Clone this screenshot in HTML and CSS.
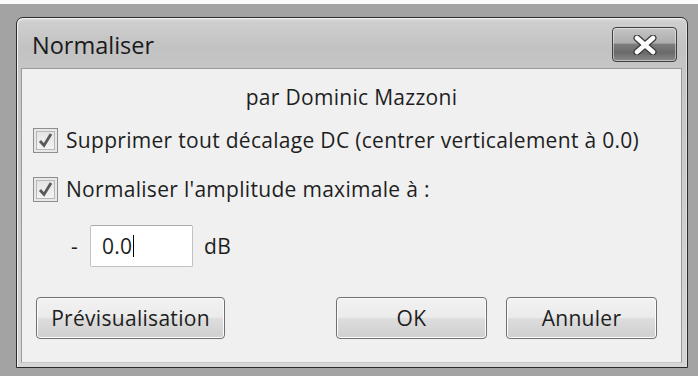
FILE: index.html
```html
<!DOCTYPE html>
<html>
<head>
<meta charset="utf-8">
<link rel="stylesheet" href="styles.css">
</head>
<body>
<div class="desktop">
  <div class="window">
    <div class="titlebar">
      <span class="title">Normaliser</span>
      <div class="close">
        <svg width="26" height="20" viewBox="0 0 26 20">
          <path d="M5 3 L21 17 M21 3 L5 17" stroke="#3a3a3a" stroke-width="7" stroke-linecap="round"/>
          <path d="M5 3 L21 17 M21 3 L5 17" stroke="#ffffff" stroke-width="4.5" stroke-linecap="round"/>
        </svg>
      </div>
    </div>
    <div class="client">
      <div class="author">par Dominic Mazzoni</div>
      <label class="check">
        <span class="box"><svg width="17" height="17" viewBox="0 0 17 17"><path d="M3 9 L7 13.5 L14 2" fill="none" stroke="#5a5a5a" stroke-width="2.8"/></svg></span>
        <span>Supprimer tout décalage DC (centrer verticalement à 0.0)</span>
      </label>
      <label class="check check2">
        <span class="box"><svg width="17" height="17" viewBox="0 0 17 17"><path d="M3 9 L7 13.5 L14 2" fill="none" stroke="#5a5a5a" stroke-width="2.8"/></svg></span>
        <span>Normaliser l'amplitude maximale à :</span>
      </label>
      <div class="level">
        <span class="minus">-</span>
        <div class="field"><span>0.0</span><span class="caret"></span></div>
        <span class="unit">dB</span>
      </div>
      <div class="buttons">
        <button class="btn preview">Prévisualisation</button>
        <div class="right">
          <button class="btn">OK</button>
          <button class="btn">Annuler</button>
        </div>
      </div>
    </div>
  </div>
</div>
</body>
</html>
```

FILE: styles.css
```css
* { box-sizing: border-box; }
html, body { margin: 0; padding: 0; }
body {
  width: 698px;
  height: 376px;
  background: #a3a3a3;
  border-top: 4px solid #fbfbfb;
  font-family: "Open Sans", "Segoe UI", sans-serif;
  color: #1e1e1e;
  overflow: hidden;
}
.desktop {
  padding: 13px 0 0 16px;
}
.window {
  width: 672px;
  height: 351px;
  border: 1px solid #2b2b2b;
  border-radius: 7px 7px 0 0;
  background: linear-gradient(#dcdcdc 0px, #cfcfcf 4px, #c2c2c2 30px, #c6c6c6 50px, #d6d6d6 100%);
  box-shadow: inset 1px 1px 0 #f4f4f4, inset -1px 0 0 #e0e0e0;
  padding: 0 5px 4px 4px;
  display: flex;
  flex-direction: column;
}
.titlebar {
  height: 50px;
  display: flex;
  align-items: flex-start;
  justify-content: space-between;
}
.title {
  font-size: 23.5px;
  margin: 13px 0 0 11px;
  color: #1a1a1a;
  line-height: 28px;
}
.close {
  width: 65px;
  height: 35px;
  margin: 9px 5px 0 0;
  border: 1px solid #404040;
  border-radius: 4px;
  background: linear-gradient(#c4c4c4 0%, #aeaeae 45%, #7c7c7c 50%, #6a6a6a 75%, #8a8a8a 100%);
  box-shadow: inset 0 0 0 1px rgba(255,255,255,0.45);
  display: flex;
  align-items: center;
  justify-content: center;
}
.client {
  flex: 1;
  background: #f0f0f0;
  border: 1px solid #9a9a9a;
  border-bottom-color: #c6c6c6;
  padding: 0 0 0 11px;
  font-size: 21px;
  letter-spacing: 0.3px;
  display: flex;
  flex-direction: column;
}
.author {
  text-align: center;
  margin: 15px 0 0 -11px;
  line-height: 26px;
}
.check {
  display: flex;
  align-items: center;
  gap: 8px;
  margin-top: 17px;
  line-height: 26px;
}
.check2 { margin-top: 23px; }
.box {
  width: 25px;
  height: 25px;
  border: 1px solid #8e8e8e;
  background: linear-gradient(#e2e2e2, #f6f6f6);
  box-shadow: inset 0 0 0 2px #e8e8e8, inset 0 0 0 3px #b8b8b8;
  display: flex;
  align-items: center;
  justify-content: center;
}
.level {
  display: flex;
  align-items: center;
  margin-top: 23px;
  padding-left: 38px;
}
.minus { width: 19px; }
.field {
  width: 103px;
  height: 42px;
  background: #fff;
  border: 1px solid #c2c2c2;
  border-top-color: #aaa;
  border-radius: 2px;
  padding-left: 11px;
  display: flex;
  align-items: center;
}
.caret {
  width: 1px;
  height: 22px;
  background: #000;
  margin-left: 1px;
}
.unit { margin-left: 11px; }
.buttons {
  display: flex;
  justify-content: space-between;
  margin-top: 30px;
  padding-right: 24px;
  padding-left: 14px;
}
.right { display: flex; gap: 19px; }
.btn {
  font-family: inherit;
  font-size: 21px;
  letter-spacing: 0.3px;
  color: #1e1e1e;
  width: 151px;
  height: 42px;
  padding: 0;
  border: 1px solid #707070;
  border-radius: 4px;
  background: linear-gradient(#f2f2f2 0%, #ebebeb 48%, #dddddd 52%, #cfcfcf 100%);
  box-shadow: inset 0 0 0 1px #fcfcfc;
}
.preview { width: 189px; margin-left: -11px; }
```
